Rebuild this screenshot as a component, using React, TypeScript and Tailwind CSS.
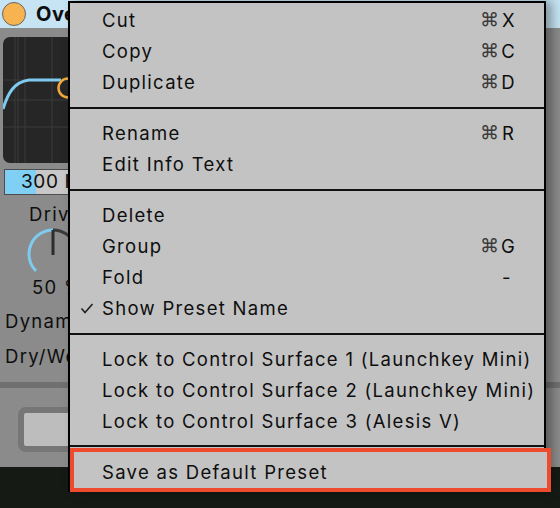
import React from 'react'

type Item = {
  label: string
  key?: string
  cmd?: boolean
  checked?: boolean
}

const sections: { items: Item[]; pad: string }[] = [
  {
    pad: 'pt-[2px] pb-[9px]',
    items: [
      { label: 'Cut', key: 'X', cmd: true },
      { label: 'Copy', key: 'C', cmd: true },
      { label: 'Duplicate', key: 'D', cmd: true },
    ],
  },
  {
    pad: 'py-[9px]',
    items: [{ label: 'Rename', key: 'R', cmd: true }, { label: 'Edit Info Text' }],
  },
  {
    pad: 'py-[9px]',
    items: [
      { label: 'Delete' },
      { label: 'Group', key: 'G', cmd: true },
      { label: 'Fold', key: '-' },
      { label: 'Show Preset Name', checked: true },
    ],
  },
  {
    pad: 'pt-[9px] pb-[8px]',
    items: [
      { label: 'Lock to Control Surface 1 (Launchkey Mini)' },
      { label: 'Lock to Control Surface 2 (Launchkey Mini)' },
      { label: 'Lock to Control Surface 3 (Alesis V)' },
    ],
  },
]

function MenuRow({ item }: { item: Item }) {
  return (
    <div className="flex h-[31px] items-center pr-[28px]">
      <div className="flex w-[32px] shrink-0 justify-center pl-[1px]">
        {item.checked && (
          <svg width="14" height="11" viewBox="0 0 14 11">
            <path d="M1.5 5.5 L5 9.5 L12.5 1" fill="none" stroke="#222" strokeWidth="1.6" />
          </svg>
        )}
      </div>
      <span className="flex-1 whitespace-nowrap">{item.label}</span>
      {item.key && (
        <div className="flex w-[36px] shrink-0 items-center">
          <span className="w-[22px] text-[19px] tracking-normal text-[#3c3c3c]">{item.cmd ? '⌘' : ''}</span>
          <span>{item.key}</span>
        </div>
      )}
    </div>
  )
}

function Display() {
  return (
    <div className="ml-[3px] h-[126px] w-[160px] overflow-hidden rounded-[7px] bg-[#262626]">
      <svg width="160" height="126" viewBox="0 0 160 126">
        {[12, 15, 22, 49, 90].map((x) => (
          <line key={x} x1={x} y1="0" x2={x} y2="126" stroke="#3b3b3b" strokeWidth="1" />
        ))}
        {[43, 63, 90].map((y) => (
          <line key={y} x1="0" y1={y} x2="160" y2={y} stroke="#3b3b3b" strokeWidth="1" />
        ))}
        <path d="M0 72 C5 56 11 45 26 43 L58 43" fill="none" stroke="#7fcaef" strokeWidth="3" />
        <circle cx="65" cy="51" r="9.5" fill="none" stroke="#f1a93d" strokeWidth="2.5" />
      </svg>
    </div>
  )
}

function Knob() {
  return (
    <svg width="110" height="54" viewBox="0 0 110 54">
      <path d="M36.03 43.97 A24 24 0 0 1 53 3" fill="none" stroke="#7fcaef" strokeWidth="3" />
      <path d="M53 3 A24 24 0 0 1 69.97 43.97" fill="none" stroke="#3a3a3a" strokeWidth="3" />
      <line x1="53" y1="3" x2="53" y2="28" stroke="#2d2d2d" strokeWidth="3" />
    </svg>
  )
}

export default function App() {
  return (
    <div
      className="relative h-[508px] w-[560px] overflow-hidden bg-[#8b8b8b] text-[18.5px] tracking-[1.3px] text-[#0e0e0e]"
      style={{ fontFamily: 'Inter, "DejaVu Sans", sans-serif' }}
    >
      {/* device behind the menu */}
      <div className="flex h-full flex-col">
        <div className="flex h-[28px] items-center bg-[#c6e4f3] pl-[2px]">
          <div className="h-[24px] w-[24px] shrink-0 rounded-full border border-[#666] bg-[#f6b34f]" />
          <span className="ml-[10px] text-[20px] font-bold tracking-[0.5px]">Overdrive</span>
        </div>
        <div className="h-[9px]" />
        <Display />
        <div className="ml-[4px] mt-[6px] flex h-[26px] w-[120px] items-center border border-[#4d4d4d] bg-[linear-gradient(90deg,#80d0f5_31px,#c8c8c8_31px)] pl-[16px] text-[19px] tracking-[0.6px]">
          300 Hz
        </div>
        <div className="mt-[8px] flex h-[24px] items-center pl-[29px]">Drive</div>
        <Knob />
        <div className="-mt-[4px] flex h-[22px] items-center pl-[32px]">50 %</div>
        <div className="mt-[11px] flex h-[24px] items-center pl-[5px]">Dynamics</div>
        <div className="mt-[11px] flex h-[24px] items-center pl-[5px]">Dry/Wet</div>
        <div className="mt-[13px] h-[6px] bg-[#707070]" />
        <div className="ml-[18px] mt-[19px] h-[45px] w-[110px] rounded-[8px] border-[6px] border-[#767676] bg-[#bdbdbd]" />
        <div className="mt-[15px] flex-1 bg-[#161a14]" />
      </div>

      {/* context menu */}
      <div className="absolute left-[68px] top-[1px] w-[478px] border-2 border-b-0 border-black bg-[#c3c3c3] shadow-[6px_0_10px_rgba(0,0,0,0.35)]">
        {sections.map((s, i) => (
          <div key={i}>
            <div className={s.pad}>
              {s.items.map((it) => (
                <MenuRow key={it.label} item={it} />
              ))}
            </div>
            <div className="h-[2px] bg-[#111]" />
          </div>
        ))}
        <div className="mt-[1px] w-[481px] border-4 border-[#ee4a2e] bg-[#c3c3c3] pt-[5px]">
          <div className="flex h-[31px] items-center pl-[28px]">Save as Default Preset</div>
        </div>
      </div>
    </div>
  )
}
